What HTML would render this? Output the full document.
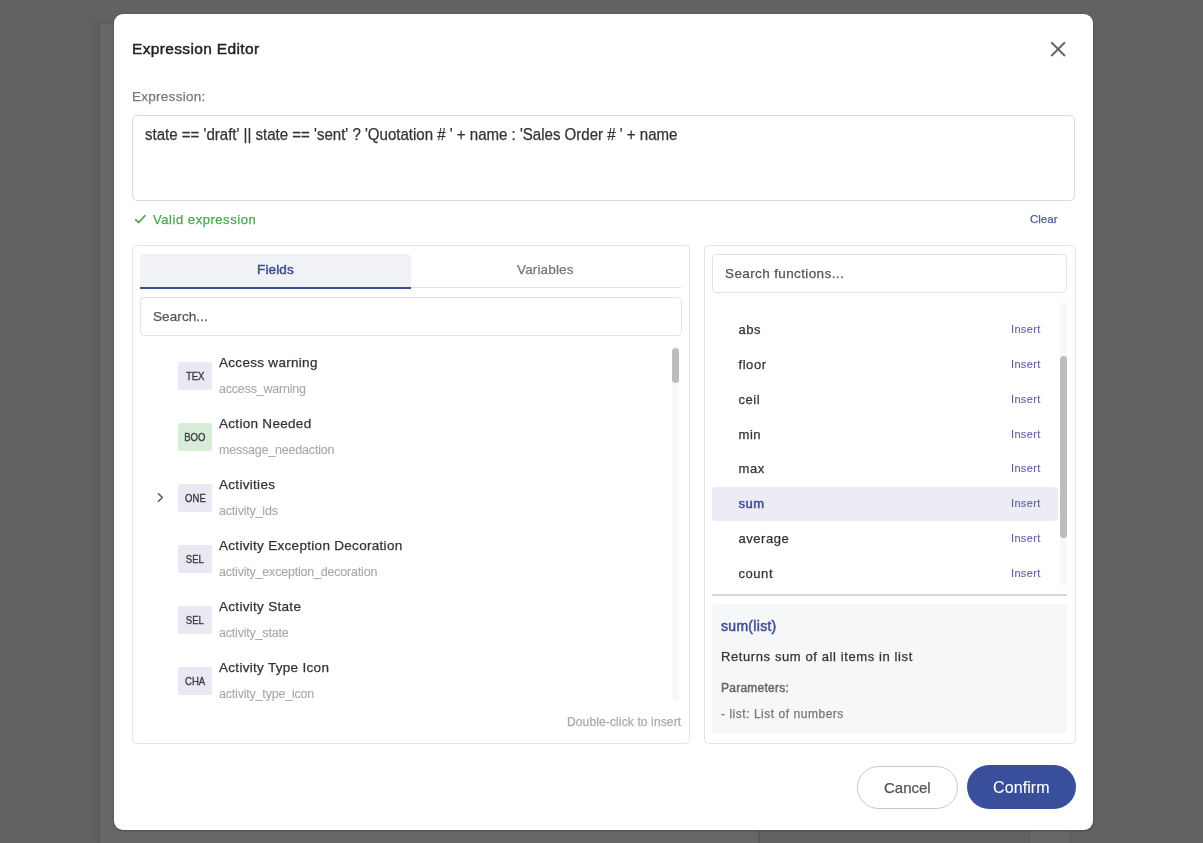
<!DOCTYPE html>
<html><head><meta charset="utf-8">
<style>
*{box-sizing:border-box;margin:0;padding:0}
html,body{width:1203px;height:843px;overflow:hidden;background:#626262;font-family:"Liberation Sans",sans-serif;position:relative}
.a{position:absolute;white-space:nowrap;-webkit-text-stroke-width:0.25px}
.bgp{position:absolute;background:#676767}
.dlg{position:absolute;left:114px;top:14px;width:979px;height:816px;background:#fff;border-radius:9px;box-shadow:0 1px 3px rgba(0,0,0,0.25)}
.title{left:132px;top:40px;font-size:15.5px;color:#222;-webkit-text-stroke:0.45px #222;letter-spacing:0.35px}
.close{left:1050px;top:41px;width:16px;height:16px}
.lbl{left:132px;top:89px;font-size:13.5px;color:#777;letter-spacing:0.27px}
.ta{left:132px;top:115px;width:943px;height:86px;border:1.5px solid #dcdcdc;border-radius:5px}
.expr{left:145px;top:126px;font-size:16px;color:#333;transform:scaleX(0.94);transform-origin:0 0}
.valid{left:153px;top:212px;font-size:13px;color:#48a84c;letter-spacing:0.55px}
.check{left:134px;top:214px;width:12px;height:10px}
.clear{left:1030px;top:213px;font-size:11.5px;color:#505a9e}
.panel{border:1.5px solid #e3e3e3;border-radius:4.5px}
.tabF{left:140px;top:254px;width:271px;height:34.5px;background:#f0f2f5;border-radius:4px 4px 0 0;border-bottom:2.5px solid #3b4d96}
.tabline{left:411px;top:287px;width:270px;height:1px;background:#e0e0e0}
.tabtxt{font-size:13.5px;letter-spacing:0.15px}
.inp{border:1.5px solid #e2e2e2;border-radius:4.5px}
.badge{width:34px;height:28px;margin-top:0.5px;border-radius:2.5px;background:#e9e9f3;font-size:11.5px;color:#3a3a3a;text-align:center;line-height:28px;letter-spacing:0px}
.badge span{display:inline-block;transform:scaleX(0.83);-webkit-text-stroke:0.35px #3a3a3a}
.ft{font-size:13.5px;color:#333;letter-spacing:0.3px;margin-top:1px}
.fs{font-size:12.5px;color:#a8a8a8;letter-spacing:-0.2px;margin-top:0.5px;-webkit-text-stroke-width:0.1px}
.fn{font-size:13px;color:#333;margin-top:1px;letter-spacing:0.55px;margin-left:0.5px}
.ins{font-size:11px;color:#5d639f;letter-spacing:0.35px;margin-left:-1px;-webkit-text-stroke-width:0.1px}
</style></head><body><div id="root" style="position:absolute;left:0;top:0;width:1203px;height:843px;will-change:transform">
<div class="bgp" style="left:98px;top:23px;width:662px;height:820px;box-shadow:-3px 0 5px rgba(0,0,0,0.06);border-left:2px solid #5a5a5a;border-top:1px solid #5e5e5e;border-right:2px solid #5a5a5a"></div>
<div class="bgp" style="left:1029px;top:800px;width:42px;height:43px;border-left:1px solid #5c5c5c;border-right:1px solid #5c5c5c"></div>

<div class="dlg"></div>
<div class="a title">Expression Editor</div>
<svg class="a close" viewBox="0 0 16 16"><path d="M1.3 1.3L15 15M15 1.3L1.3 15" stroke="#666" stroke-width="2" fill="none"/></svg>

<div class="a lbl">Expression:</div>
<div class="a ta"></div>
<div class="a expr">state == 'draft' || state == 'sent' ? 'Quotation # ' + name : 'Sales Order # ' + name</div>

<svg class="a check" viewBox="0 0 12 10"><path d="M1.2 5.2L4.6 8.5L11.4 1.3" stroke="#43a047" stroke-width="1.6" fill="none"/></svg>
<div class="a valid">Valid expression</div>
<div class="a clear">Clear</div>

<!-- Fields panel -->
<div class="a panel" style="left:132px;top:245px;width:558px;height:499px"></div>
<div class="a tabF"></div>
<div class="a tabline"></div>
<div class="a tabtxt" style="left:257px;top:262px;color:#3b4d96;-webkit-text-stroke:0.45px #3b4d96">Fields</div>
<div class="a tabtxt" style="left:517px;top:262px;color:#777">Variables</div>
<div class="a inp" style="left:140px;top:297px;width:542px;height:39px"></div>
<div class="a" style="left:153px;top:309px;font-size:13.5px;color:#555;letter-spacing:0.1px">Search...</div>

<div class="a" style="left:672px;top:347px;width:7px;height:355px;background:#f8f8f8;border-radius:4px"></div>
<div class="a" style="left:672px;top:348px;width:7px;height:35px;background:#bdbdbd;border-radius:4px"></div>

<div class="a badge" style="left:178px;top:361px"><span>TEX</span></div>
<div class="a ft" style="left:219px;top:354px">Access warning</div>
<div class="a fs" style="left:219px;top:381px">access_warning</div>

<div class="a badge" style="left:178px;top:422px;background:#d8ecd8"><span>BOO</span></div>
<div class="a ft" style="left:219px;top:415px">Action Needed</div>
<div class="a fs" style="left:219px;top:442px">message_needaction</div>

<svg class="a" style="left:156px;top:492px" width="9" height="12" viewBox="0 0 9 12"><path d="M2 1.3L6.3 5.5L2 9.7" stroke="#5a5a5a" stroke-width="1.5" fill="none"/></svg>
<div class="a badge" style="left:178px;top:483px"><span>ONE</span></div>
<div class="a ft" style="left:219px;top:476px">Activities</div>
<div class="a fs" style="left:219px;top:503px">activity_ids</div>

<div class="a badge" style="left:178px;top:544px"><span>SEL</span></div>
<div class="a ft" style="left:219px;top:537px">Activity Exception Decoration</div>
<div class="a fs" style="left:219px;top:564px">activity_exception_decoration</div>

<div class="a badge" style="left:178px;top:605px"><span>SEL</span></div>
<div class="a ft" style="left:219px;top:598px">Activity State</div>
<div class="a fs" style="left:219px;top:625px">activity_state</div>

<div class="a badge" style="left:178px;top:666px"><span>CHA</span></div>
<div class="a ft" style="left:219px;top:659px">Activity Type Icon</div>
<div class="a fs" style="left:219px;top:686px">activity_type_icon</div>

<div class="a" style="left:567px;top:715px;font-size:12px;color:#aaa;letter-spacing:0.13px">Double-click to insert</div>

<!-- Functions panel -->
<div class="a panel" style="left:704px;top:245px;width:372px;height:499px"></div>
<div class="a inp" style="left:712px;top:254px;width:355px;height:39px"></div>
<div class="a" style="left:725px;top:266px;font-size:13.5px;color:#555;letter-spacing:0.38px">Search functions...</div>

<div class="a" style="left:1060px;top:302px;width:7px;height:284px;background:#f8f8f8;border-radius:4px"></div>
<div class="a" style="left:1060px;top:356px;width:7px;height:182px;background:#bdbdbd;border-radius:4px"></div>

<div class="a" style="left:712px;top:487px;width:346px;height:34px;background:#ebecf5;border-radius:4px"></div>



<div class="a" style="left:712px;top:594px;width:355px;height:2px;background:#d6d6d6"></div>
<div class="a" style="left:712px;top:604px;width:355px;height:130px;background:#f6f7f8;border-radius:5px"></div>
<div class="a" style="left:721px;top:618px;font-size:14px;color:#3f4d94;-webkit-text-stroke:0.5px #3f4d94;letter-spacing:0.3px">sum(list)</div>
<div class="a" style="left:721px;top:649px;font-size:13px;color:#333;letter-spacing:0.6px">Returns sum of all items in list</div>
<div class="a" style="left:721px;top:681px;font-size:12px;color:#666;-webkit-text-stroke:0.45px #666;letter-spacing:0.25px">Parameters:</div>
<div class="a" style="left:721px;top:707px;font-size:12px;color:#777;letter-spacing:0.53px">- list: List of numbers</div>

<!-- Buttons -->
<div class="a" style="left:857px;top:766px;width:101px;height:43px;border:1px solid #c9c9c9;border-radius:22px"></div>
<div class="a" style="left:884px;top:779px;font-size:15px;color:#555">Cancel</div>
<div class="a" style="left:967px;top:765px;width:109px;height:44px;background:#3a4f9c;border-radius:22px"></div>
<div class="a" style="left:993px;top:779px;font-size:16px;color:#fff;-webkit-text-stroke:0.1px #fff;letter-spacing:0.1px">Confirm</div>

<div class="a fn" style="left:738px;top:321px">abs</div>
<div class="a ins" style="left:1012px;top:323px">Insert</div>
<div class="a fn" style="left:738px;top:356px">floor</div>
<div class="a ins" style="left:1012px;top:358px">Insert</div>
<div class="a fn" style="left:738px;top:391px">ceil</div>
<div class="a ins" style="left:1012px;top:393px">Insert</div>
<div class="a fn" style="left:738px;top:426px">min</div>
<div class="a ins" style="left:1012px;top:428px">Insert</div>
<div class="a fn" style="left:738px;top:460px">max</div>
<div class="a ins" style="left:1012px;top:462px">Insert</div>
<div class="a fn" style="left:738px;top:495px;color:#3f4d94;-webkit-text-stroke:0.5px #3f4d94">sum</div>
<div class="a ins" style="left:1012px;top:497px">Insert</div>
<div class="a fn" style="left:738px;top:530px">average</div>
<div class="a ins" style="left:1012px;top:532px">Insert</div>
<div class="a fn" style="left:738px;top:565px">count</div>
<div class="a ins" style="left:1012px;top:567px">Insert</div>
</div></body></html>
